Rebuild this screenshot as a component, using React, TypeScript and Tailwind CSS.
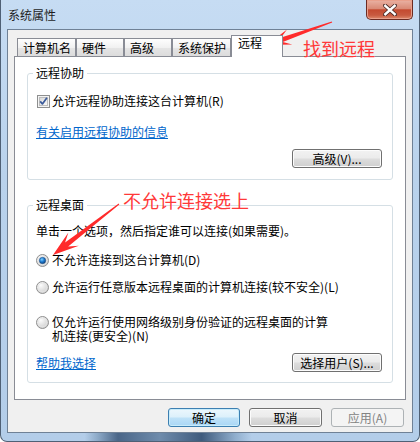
import React from "react";

type P = [number, number];

function arrowPoints(tail: P, tip: P, headLen: number, headW: number, w0: number, w1: number) {
  const dx = tip[0] - tail[0];
  const dy = tip[1] - tail[1];
  const len = Math.hypot(dx, dy);
  const d: P = [dx / len, dy / len];
  const p: P = [-d[1], d[0]];
  const at = (base: P, along: number, side: number): P => [
    base[0] + d[0] * along + p[0] * side,
    base[1] + d[1] * along + p[1] * side,
  ];
  const pts: P[] = [
    tip,
    at(tip, -headLen - 2, headW / 2),
    at(tip, -headLen * 0.72, w1 / 2),
    at(tail, 0, w0 / 2),
    at(tail, 0, -w0 / 2),
    at(tip, -headLen * 0.72, -w1 / 2),
    at(tip, -headLen - 2, -headW / 2),
  ];
  return pts.map((q) => `${q[0].toFixed(1)},${q[1].toFixed(1)}`).join(" ");
}

function Checkbox() {
  return (
    <svg width="13" height="13" viewBox="0 0 13 13" className="shrink-0">
      <defs>
        <linearGradient id="cbg" x1="0" y1="0" x2="1" y2="1">
          <stop offset="0" stopColor="#d8d8d8" />
          <stop offset="1" stopColor="#fbfbfb" />
        </linearGradient>
      </defs>
      <rect x="0.5" y="0.5" width="12" height="12" fill="#f4f4f4" stroke="#8e8f8f" />
      <rect x="2.5" y="2.5" width="8" height="8" fill="url(#cbg)" stroke="#bdbdbd" />
      <path d="M3.2 6.4 L5.4 8.9 L9.9 2.8" fill="none" stroke="#3a5a9a" strokeWidth="1.7" strokeLinejoin="round" />
    </svg>
  );
}

function Radio({ checked }: { checked?: boolean }) {
  return (
    <svg width="13" height="13" viewBox="0 0 13 13" className="shrink-0">
      <defs>
        <radialGradient id="rbg" cx="0.35" cy="0.3" r="0.8">
          <stop offset="0" stopColor="#fdfdfd" />
          <stop offset="1" stopColor="#c9c9c9" />
        </radialGradient>
        <radialGradient id="rdot" cx="0.4" cy="0.35" r="0.7">
          <stop offset="0" stopColor="#7fd0ff" />
          <stop offset="0.5" stopColor="#1f7bd0" />
          <stop offset="1" stopColor="#0b3d7a" />
        </radialGradient>
      </defs>
      <circle cx="6.5" cy="6.5" r="6" fill="url(#rbg)" stroke="#8f8f8f" />
      <circle cx="6.5" cy="6.5" r="4.3" fill="none" stroke="#e6e6e6" strokeWidth="0.8" />
      {checked && <circle cx="6.5" cy="6.5" r="3.2" fill="url(#rdot)" stroke="#1b4a80" strokeWidth="0.5" />}
    </svg>
  );
}

function Btn({ children, w, kind }: { children: React.ReactNode; w: string; kind?: "default" | "disabled" }) {
  const base = "h-[19px] flex items-center justify-center rounded-[3px] border leading-[16px] shrink-0 ";
  if (kind === "default")
    return (
      <div className={base + w + " border-[#3c7fb1] bg-[linear-gradient(to_bottom,#ecf7fd_0%,#dcf0fb_48%,#bfe2f8_52%,#a9d6f5_100%)] shadow-[inset_0_0_0_1px_#c8ecfb]"}>
        {children}
      </div>
    );
  if (kind === "disabled")
    return <div className={base + w + " border-[#adb2b5] bg-[#f4f4f4] text-[#838383]"}>{children}</div>;
  return (
    <div className={base + w + " border-[#707070] bg-[linear-gradient(to_bottom,#f2f2f2_0%,#ebebeb_48%,#dddddd_52%,#cfcfcf_100%)] shadow-[inset_0_0_0_1px_#fcfcfc]"}>
      {children}
    </div>
  );
}

export default function App() {
  const tabs = [
    { t: "计算机名", w: "w-[59px]" },
    { t: "硬件", w: "w-[48px]" },
    { t: "高级", w: "w-[48px]" },
    { t: "系统保护", w: "w-[59px]" },
  ];
  return (
    <div className="relative w-[420px] h-[442px] overflow-hidden rounded-b-[7px] border-x border-b border-[#4f6075] bg-[linear-gradient(to_bottom,#c6dcf3_0%,#b9d2ec_40%,#b3cde9_100%)] font-['Noto_Sans_CJK_SC','Noto_Sans',sans-serif] text-[12px] text-black">
      {/* title bar */}
      <div className="flex items-start h-[29px]">
        <div className="ml-[7px] mt-[7px] leading-[16px] text-[12px] text-[#1e1e1e]">系统属性</div>
        <div className="ml-auto mr-[6px] w-[47px] h-[20px] rounded-b-[5px] border border-t-0 border-[#6b2b22] bg-[linear-gradient(to_bottom,#eab2a4_0%,#d98a76_45%,#c44a30_52%,#c85a40_80%,#dd8a6c_100%)] flex items-center justify-center shadow-[inset_0_0_0_1px_#e9a08c]">
          <svg width="14" height="12" viewBox="0 0 14 12">
            <path d="M2 1.5 L12 10.5 M12 1.5 L2 10.5" stroke="#4a2a26" strokeWidth="4" strokeLinecap="round" />
            <path d="M2.3 1.8 L11.7 10.2 M11.7 1.8 L2.3 10.2" stroke="#ffffff" strokeWidth="2.4" strokeLinecap="square" />
          </svg>
        </div>
      </div>

      {/* client area */}
      <div className="mx-[6px] h-[404px] border border-[#6f8196] bg-[#f0f0f0] px-[6px] pt-[5px]">
        {/* tab strip */}
        <div className="relative z-10 flex items-end h-[21px] pl-[3px]">
          {tabs.map((tb) => (
            <div
              key={tb.t}
              className={"h-[18px] border border-b-0 border-[#898c95] bg-[linear-gradient(to_bottom,#fefefe_0%,#f1f1f1_50%,#e5e5e5_51%,#dcdcdc_100%)] pl-[5px] flex items-center leading-[14px] " + tb.w}
            >
              {tb.t}
            </div>
          ))}
          <div className="w-[52px] h-[22px] mb-[-1px] border border-b-0 border-[#898c95] bg-white pl-[6px] leading-[14px]">远程</div>
        </div>

        {/* tab panel */}
        <div className="h-[344px] border border-[#898c95] bg-white px-[12px] pt-[16px]">
          {/* group 1 */}
          <div className="relative h-[107px] rounded-[3px] border border-[#d5dfe5] pl-[8px] pr-[10px] flex flex-col">
            <span className="absolute left-[5px] top-[-9px] bg-white px-[3px] leading-[16px]">远程协助</span>
            <div className="mt-[19px] h-[16px] flex items-center pl-[1px]">
              <Checkbox />
              <span className="ml-[2px] leading-[16px]">允许远程协助连接这台计算机(R)</span>
            </div>
            <div className="mt-[15px] h-[16px] leading-[16px]">
              <span className="text-[#0066cc] underline">有关启用远程协助的信息</span>
            </div>
            <div className="mt-[9px] flex justify-end">
              <Btn w="w-[90px]">高级(V)...</Btn>
            </div>
          </div>

          {/* group 2 */}
          <div className="relative mt-[25px] h-[178px] rounded-[3px] border border-[#d5dfe5] pl-[8px] pr-[10px] flex flex-col">
            <span className="absolute left-[5px] top-[-9px] bg-white px-[3px] leading-[16px]">远程桌面</span>
            <div className="mt-[17px] h-[16px] leading-[16px]">单击一个选项，然后指定谁可以连接(如果需要)。</div>
            <div className="mt-[13px] h-[16px] flex items-center">
              <Radio checked />
              <span className="ml-[3px] leading-[16px]">不允许连接到这台计算机(D)</span>
            </div>
            <div className="mt-[11px] h-[16px] flex items-center">
              <Radio />
              <span className="ml-[3px] leading-[16px]">允许运行任意版本远程桌面的计算机连接(较不安全)(L)</span>
            </div>
            <div className="mt-[20px] flex items-start">
              <div className="mt-[1px]">
                <Radio />
              </div>
              <span className="ml-[3px] leading-[14px]">
                仅允许运行使用网络级别身份验证的远程桌面的计算
                <br />
                机连接(更安全)(N)
              </span>
            </div>
            <div className="mt-[10px] flex items-center justify-between">
              <span className="text-[#0066cc] underline leading-[16px]">帮助我选择</span>
              <Btn w="w-[90px]">选择用户(S)...</Btn>
            </div>
          </div>
        </div>

        {/* bottom buttons */}
        <div className="mt-[8px] pr-[2px] flex justify-end gap-[9px]">
          <Btn w="w-[72px]" kind="default">确定</Btn>
          <Btn w="w-[73px]">取消</Btn>
          <Btn w="w-[73px]" kind="disabled">应用(A)</Btn>
        </div>
      </div>

      {/* bottom frame reflection */}
      <div className="h-[8px] bg-[linear-gradient(to_right,transparent_20%,#8eabc9_23%,#4a6688_28%,#6f8cac_38%,#3f5b7d_48%,#90aecd_56%,transparent_60%)]" />

      {/* annotations */}
      <svg className="absolute left-0 top-0 pointer-events-none" width="420" height="442">
        <polygon points={arrowPoints([331, 22], [266, 45], 22, 16, 1, 5)} fill="#ff2b2b" />
        <polygon points={arrowPoints([118, 204], [52, 255], 24, 17, 1, 5)} fill="#ff2b2b" />
      </svg>
      <span className="absolute left-[302px] top-[37px] text-[18px] leading-[22px] text-[#ff3838] pointer-events-none">找到远程</span>
      <span className="absolute left-[122px] top-[189px] text-[18px] leading-[22px] text-[#ff3838] pointer-events-none">不允许连接选上</span>
    </div>
  );
}
